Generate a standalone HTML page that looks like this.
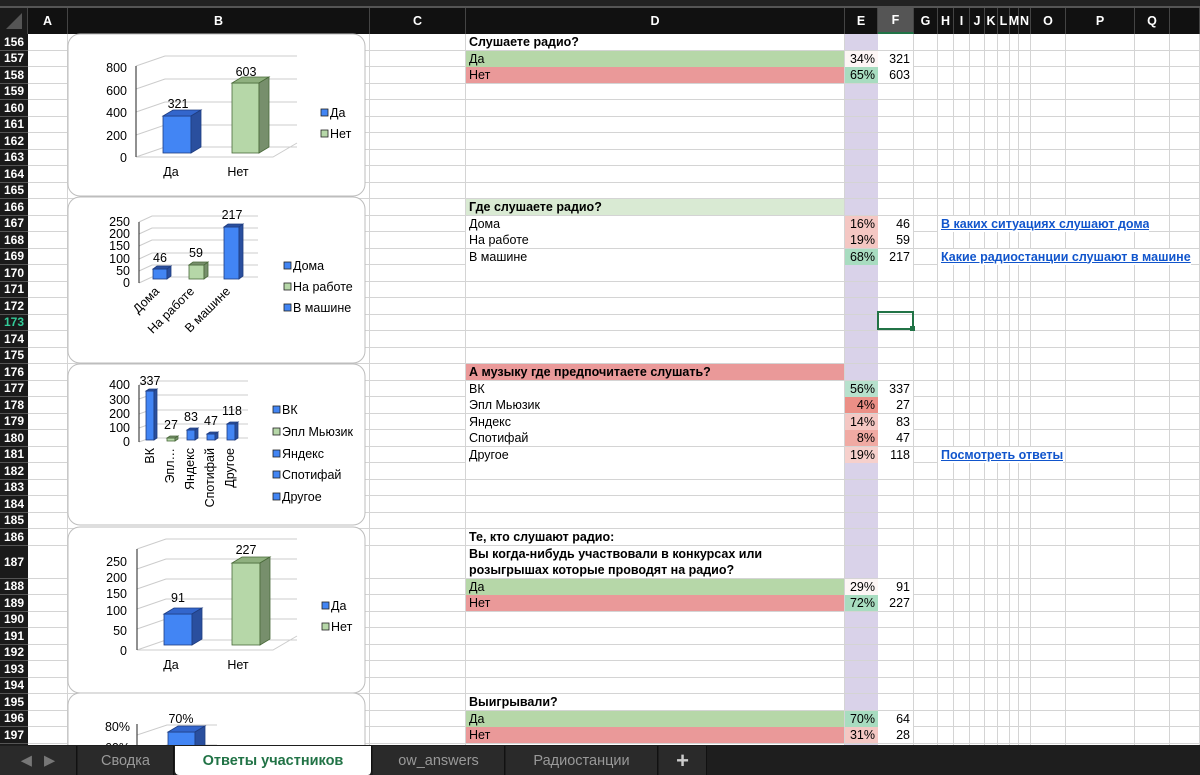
<!DOCTYPE html>
<html><head><meta charset="utf-8"><style>
*{margin:0;padding:0;box-sizing:border-box}
body{width:1200px;height:775px;overflow:hidden;background:#fff;position:relative;font-family:"Liberation Sans","DejaVu Sans",sans-serif;font-size:12.5px;color:#000}
.a{position:absolute}
.rh{position:absolute;left:0;width:28px;background:#1a1a1a;color:#fff;font-weight:bold;font-size:12px;text-align:center;border-bottom:1px solid #555;display:flex;align-items:center;justify-content:center}
.ch{position:absolute;top:8px;height:26px;background:#111;color:#fff;font-weight:bold;font-size:12.5px;display:flex;align-items:center;justify-content:center;border-right:1px solid #444}
.vl{position:absolute;top:34px;height:711px;width:1px;background:#d4d4d4}
.hl{position:absolute;left:28px;width:1172px;height:1px;background:#d4d4d4}
.c{position:absolute;padding-left:3px;line-height:16px;white-space:nowrap;overflow:hidden}
.r{text-align:right;padding-right:3px;padding-left:0}
.lk{color:#1155cc;font-weight:bold;text-decoration:underline}
.tab{position:absolute;top:746px;height:29px;color:#999;font-size:14.5px;display:flex;align-items:center;justify-content:center;background:#2a2a2a;border-right:1px solid #111}
</style></head><body>
<div class="a" style="left:0;top:0;width:1200px;height:8px;background:#222;border-bottom:2px solid #555"></div>
<div id="g"></div>
<svg class="a" style="left:0;top:0" width="1200" height="775" font-family="Liberation Sans, sans-serif" font-size="12.5">
<g fill="#fff" stroke="#bdbdbd">
<rect x="68" y="34" width="297" height="162" rx="12"/>
<rect x="68" y="197" width="297" height="166" rx="12"/>
<rect x="68" y="364" width="297" height="161" rx="12"/>
<rect x="68" y="527" width="297" height="166" rx="12"/>
<rect x="68" y="693" width="297" height="120" rx="12"/>
</g>
<g stroke="#ccc" fill="none">
<path d="M136 157 L165 147 L297 147 M136 135 L165 125 L297 125 M136 112 L165 102 L297 102 M136 89 L165 79 L297 79 M136 66 L165 56 L297 56 M136 157 L273 157 L297 143"/>
<path d="M137 650 L166 640 L297 640 M137 629 L166 619 L297 619 M137 609 L166 599 L297 599 M137 589 L166 579 L297 579 M137 569 L166 559 L297 559 M137 549 L166 539 L297 539 M137 650 L273 650 L297 636"/>
<path d="M139 283 L152 277 L258 277 M139 271 L152 265 L258 265 M139 259 L152 253 L258 253 M139 246 L152 240 L258 240 M139 234 L152 228 L258 228 M139 222 L152 216 L258 216"/>
<path d="M139 442 L150 438 L248 438 M139 428 L150 424 L248 424 M139 414 L150 410 L248 410 M139 399 L150 395 L248 395 M139 385 L150 381 L248 381"/>
<path d="M137 735 L167 725 L217 725 M137 755 L167 745 L217 745"/>
</g>
<g stroke="#222" stroke-width="1"><path d="M136 66 V157 M139 222 V283 M139 385 V442 M137 549 V650 M137 724 V760"/></g>
<g font-size="12.5" text-anchor="end">
<text x="127" y="72">800</text><text x="127" y="95">600</text><text x="127" y="117">400</text><text x="127" y="140">200</text><text x="127" y="162">0</text>
<text x="130" y="226">250</text><text x="130" y="238">200</text><text x="130" y="250">150</text><text x="130" y="263">100</text><text x="130" y="275">50</text><text x="130" y="287">0</text>
<text x="130" y="389">400</text><text x="130" y="404">300</text><text x="130" y="418">200</text><text x="130" y="432">100</text><text x="130" y="446">0</text>
<text x="127" y="566">250</text><text x="127" y="582">200</text><text x="127" y="598">150</text><text x="127" y="615">100</text><text x="127" y="635">50</text><text x="127" y="655">0</text>
<text x="130" y="731">80%</text><text x="130" y="752">60%</text>
</g>
<g stroke="#1f3d80" stroke-width=".8">
<rect x="163" y="116" width="28" height="37" fill="#4285f4"/><path d="M163 116 L173 110 L201 110 L191 116Z" fill="#3366cc"/><path d="M191 116 L201 110 L201 147 L191 153Z" fill="#2a4f9e"/>
<rect x="164" y="614" width="28" height="31" fill="#4285f4"/><path d="M164 614 L174 608 L202 608 L192 614Z" fill="#3366cc"/><path d="M192 614 L202 608 L202 639 L192 645Z" fill="#2a4f9e"/>
<rect x="168" y="732" width="27" height="30" fill="#4285f4"/><path d="M168 732 L178 726 L205 726 L195 732Z" fill="#3366cc"/><path d="M195 732 L205 726 L205 760 L195 762Z" fill="#2a4f9e"/>
<rect x="153" y="269" width="14" height="10" fill="#4285f4"/><path d="M153 269 L157 266 L171 266 L167 269Z M167 269 L171 266 L171 276 L167 279Z" fill="#2a4f9e"/>
<rect x="224" y="227" width="15" height="52" fill="#4285f4"/><path d="M224 227 L228 224 L243 224 L239 227Z M239 227 L243 224 L243 276 L239 279Z" fill="#2a4f9e"/>
<rect x="146" y="391" width="8" height="49" fill="#4285f4"/><path d="M146 391 L149 389 L157 389 L154 391Z M154 391 L157 389 L157 438 L154 440Z" fill="#2a4f9e"/>
<rect x="187" y="430" width="8" height="10" fill="#4285f4"/><path d="M187 430 L190 428 L198 428 L195 430Z M195 430 L198 428 L198 438 L195 440Z" fill="#2a4f9e"/>
<rect x="207" y="434" width="8" height="6" fill="#4285f4"/><path d="M207 434 L210 432 L218 432 L215 434Z M215 434 L218 432 L218 438 L215 440Z" fill="#2a4f9e"/>
<rect x="227" y="424" width="8" height="16" fill="#4285f4"/><path d="M227 424 L230 422 L238 422 L235 424Z M235 424 L238 422 L238 438 L235 440Z" fill="#2a4f9e"/>
</g>
<g stroke="#4a6a3a" stroke-width=".8">
<rect x="232" y="83" width="27" height="70" fill="#b6d7a8"/><path d="M232 83 L242 77 L269 77 L259 83Z" fill="#8fb07f"/><path d="M259 83 L269 77 L269 147 L259 153Z" fill="#778f6c"/>
<rect x="232" y="563" width="28" height="82" fill="#b6d7a8"/><path d="M232 563 L242 557 L270 557 L260 563Z" fill="#8fb07f"/><path d="M260 563 L270 557 L270 639 L260 645Z" fill="#778f6c"/>
<rect x="189" y="265" width="15" height="14" fill="#b6d7a8"/><path d="M189 265 L193 262 L208 262 L204 265Z M204 265 L208 262 L208 276 L204 279Z" fill="#778f6c"/>
<rect x="167" y="438" width="8" height="3" fill="#b6d7a8"/><path d="M167 438 L170 436 L178 436 L175 438Z M175 438 L178 436 L178 439 L175 441Z" fill="#778f6c"/>
</g>
<g text-anchor="middle">
<text x="178" y="108">321</text><text x="246" y="76">603</text><text x="171" y="176">Да</text><text x="238" y="176">Нет</text>
<text x="160" y="262">46</text><text x="196" y="257">59</text><text x="232" y="219">217</text>
<text x="150" y="385">337</text><text x="171" y="429">27</text><text x="191" y="421">83</text><text x="211" y="425">47</text><text x="232" y="415">118</text>
<text x="178" y="602">91</text><text x="246" y="554">227</text><text x="171" y="669">Да</text><text x="238" y="669">Нет</text>
<text x="181" y="723">70%</text>
</g>
<g text-anchor="end">
<text transform="translate(160,292) rotate(-45)">Дома</text>
<text transform="translate(195,292) rotate(-45)">На работе</text>
<text transform="translate(231,292) rotate(-45)">В машине</text>
<text transform="translate(154,448) rotate(-90)">ВК</text>
<text transform="translate(174,448) rotate(-90)">Эпл…</text>
<text transform="translate(194,448) rotate(-90)">Яндекс</text>
<text transform="translate(214,448) rotate(-90)">Спотифай</text>
<text transform="translate(234,448) rotate(-90)">Другое</text>
</g>
<g stroke="#222" stroke-width=".8">
<rect x="321" y="109" width="7" height="7" fill="#4285f4"/><rect x="321" y="130" width="7" height="7" fill="#b6d7a8"/>
<rect x="284" y="262" width="7" height="7" fill="#4285f4"/><rect x="284" y="283" width="7" height="7" fill="#b6d7a8"/><rect x="284" y="304" width="7" height="7" fill="#4285f4"/>
<rect x="273" y="406" width="7" height="7" fill="#4285f4"/><rect x="273" y="428" width="7" height="7" fill="#b6d7a8"/><rect x="273" y="450" width="7" height="7" fill="#4285f4"/><rect x="273" y="471" width="7" height="7" fill="#4285f4"/><rect x="273" y="493" width="7" height="7" fill="#4285f4"/>
<rect x="322" y="602" width="7" height="7" fill="#4285f4"/><rect x="322" y="623" width="7" height="7" fill="#b6d7a8"/>
</g>
<g>
<text x="330" y="117">Да</text><text x="330" y="138">Нет</text>
<text x="293" y="270">Дома</text><text x="293" y="291">На работе</text><text x="293" y="312">В машине</text>
<text x="282" y="414">ВК</text><text x="282" y="436">Эпл Мьюзик</text><text x="282" y="458">Яндекс</text><text x="282" y="479">Спотифай</text><text x="282" y="501">Другое</text>
<text x="331" y="610">Да</text><text x="331" y="631">Нет</text>
</g>
</svg>
<div id="cells"></div>
<div class="a" style="left:877px;top:311px;width:37px;height:19px;border:2px solid #217346"></div>
<div class="a" style="left:910px;top:326px;width:5px;height:5px;background:#217346"></div>
<div class="a" style="left:0;top:745px;width:1200px;height:30px;background:#1e1e1e"></div>
<div class="tab" style="left:0;width:77px;color:#777">◀&nbsp;&nbsp;&nbsp;▶</div>
<div class="tab" style="left:78px;width:96px">Сводка</div>
<div class="tab" style="left:175px;width:197px;background:#fff;color:#217346;font-weight:bold;border-radius:0 0 4px 4px">Ответы участников</div>
<div class="tab" style="left:373px;width:132px">ow_answers</div>
<div class="tab" style="left:506px;width:152px">Радиостанции</div>
<div class="tab" style="left:659px;width:48px;color:#ccc;font-size:22px;font-weight:bold">+</div>
<script>
var cols=[[28,68,'A'],[68,370,'B'],[370,466,'C'],[466,845,'D'],[845,878,'E'],[878,914,'F'],[914,938,'G'],[938,954,'H'],[954,970,'I'],[970,985,'J'],[985,998,'K'],[998,1010,'L'],[1010,1019,'M'],[1019,1031,'N'],[1031,1066,'O'],[1066,1135,'P'],[1135,1170,'Q'],[1170,1200,'']];
function T(i){return 34+(i-156)*16.5+(i>187?16.5:0)}
function H(i){return i==187?33:16.5}
var h='<div class="ch" style="left:0;width:28px;background:#1a1a1a"><svg width="20" height="20"><path d="M18 2 L18 18 L2 18Z" fill="#555"/></svg></div>';
cols.forEach(function(c){h+='<div class="ch" style="left:'+c[0]+'px;width:'+(c[1]-c[0])+'px'+(c[2]=='F'?';background:#555;border-bottom:2px solid #217346':'')+'">'+c[2]+'</div>';h+='<div class="vl" style="left:'+(c[1]-1)+'px"></div>'});
h+='<div class="a" style="left:845px;top:34px;width:33px;height:711px;background:#d9d2e9"></div>';
for(var i=156;i<=198;i++){h+='<div class="hl" style="top:'+(T(i)+H(i)-1)+'px"></div>';h+='<div class="rh" style="top:'+T(i)+'px;height:'+H(i)+'px;'+(i==173?'color:#3c9;':'')+'">'+i+'</div>';}
document.getElementById('g').innerHTML=h;
var G='#b6d7a8',R='#ea9999',LG='#d9ead3',EG='#a8dcc0',EP='#f4c7c3',ER='#eb8f86',EW='#fdf6f5';
var data=[
[156,'Слушаете радио?','#fff',1],[157,'Да',G,0,'34%',EW,'321'],[158,'Нет',R,0,'65%',EG,'603'],
[166,'Где слушаете радио?',LG,1],[167,'Дома','#fff',0,'16%',EP,'46'],[168,'На работе','#fff',0,'19%',EP,'59'],[169,'В машине','#fff',0,'68%',EG,'217'],
[176,'А музыку где предпочитаете слушать?',R,1],[177,'ВК','#fff',0,'56%','#b7e1cd','337'],[178,'Эпл Мьюзик','#fff',0,'4%',ER,'27'],[179,'Яндекс','#fff',0,'14%',EP,'83'],[180,'Спотифай','#fff',0,'8%','#f0aaa3','47'],[181,'Другое','#fff',0,'19%','#f6d0cc','118'],
[186,'Те, кто слушают радио:','#fff',1],
[188,'Да',G,0,'29%',EW,'91'],[189,'Нет',R,0,'72%',EG,'227'],
[195,'Выигрывали?','#fff',1],[196,'Да',G,0,'70%',EG,'64'],[197,'Нет',R,0,'31%',EP,'28']];
var s='';
data.forEach(function(d){var t=T(d[0]);s+='<div class="c" style="left:466px;top:'+t+'px;width:378px;height:16px;background:'+d[2]+';'+(d[3]?'font-weight:bold':'')+'">'+d[1]+'</div>';
if(d[4]){s+='<div class="c r" style="left:845px;top:'+t+'px;width:33px;height:16px;background:'+d[5]+'">'+d[4]+'</div>';s+='<div class="c r" style="left:878px;top:'+t+'px;width:35px;height:16px;background:#fff">'+d[6]+'</div>';}});
s+='<div class="c" style="left:466px;top:'+T(187)+'px;width:378px;height:32px;background:#fff;font-weight:bold;line-height:16px">Вы когда-нибудь участвовали в конкурсах или<br>розыгрышах которые проводят на радио?</div>';
s+='<div class="c lk" style="left:938px;top:'+T(167)+'px;background:#fff">В каких ситуациях слушают дома</div>';
s+='<div class="c lk" style="left:938px;top:'+T(169)+'px;background:#fff">Какие радиостанции слушают в машине</div>';
s+='<div class="c lk" style="left:938px;top:'+T(181)+'px;background:#fff">Посмотреть ответы</div>';
document.getElementById('cells').innerHTML=s;
</script>
</body></html>
